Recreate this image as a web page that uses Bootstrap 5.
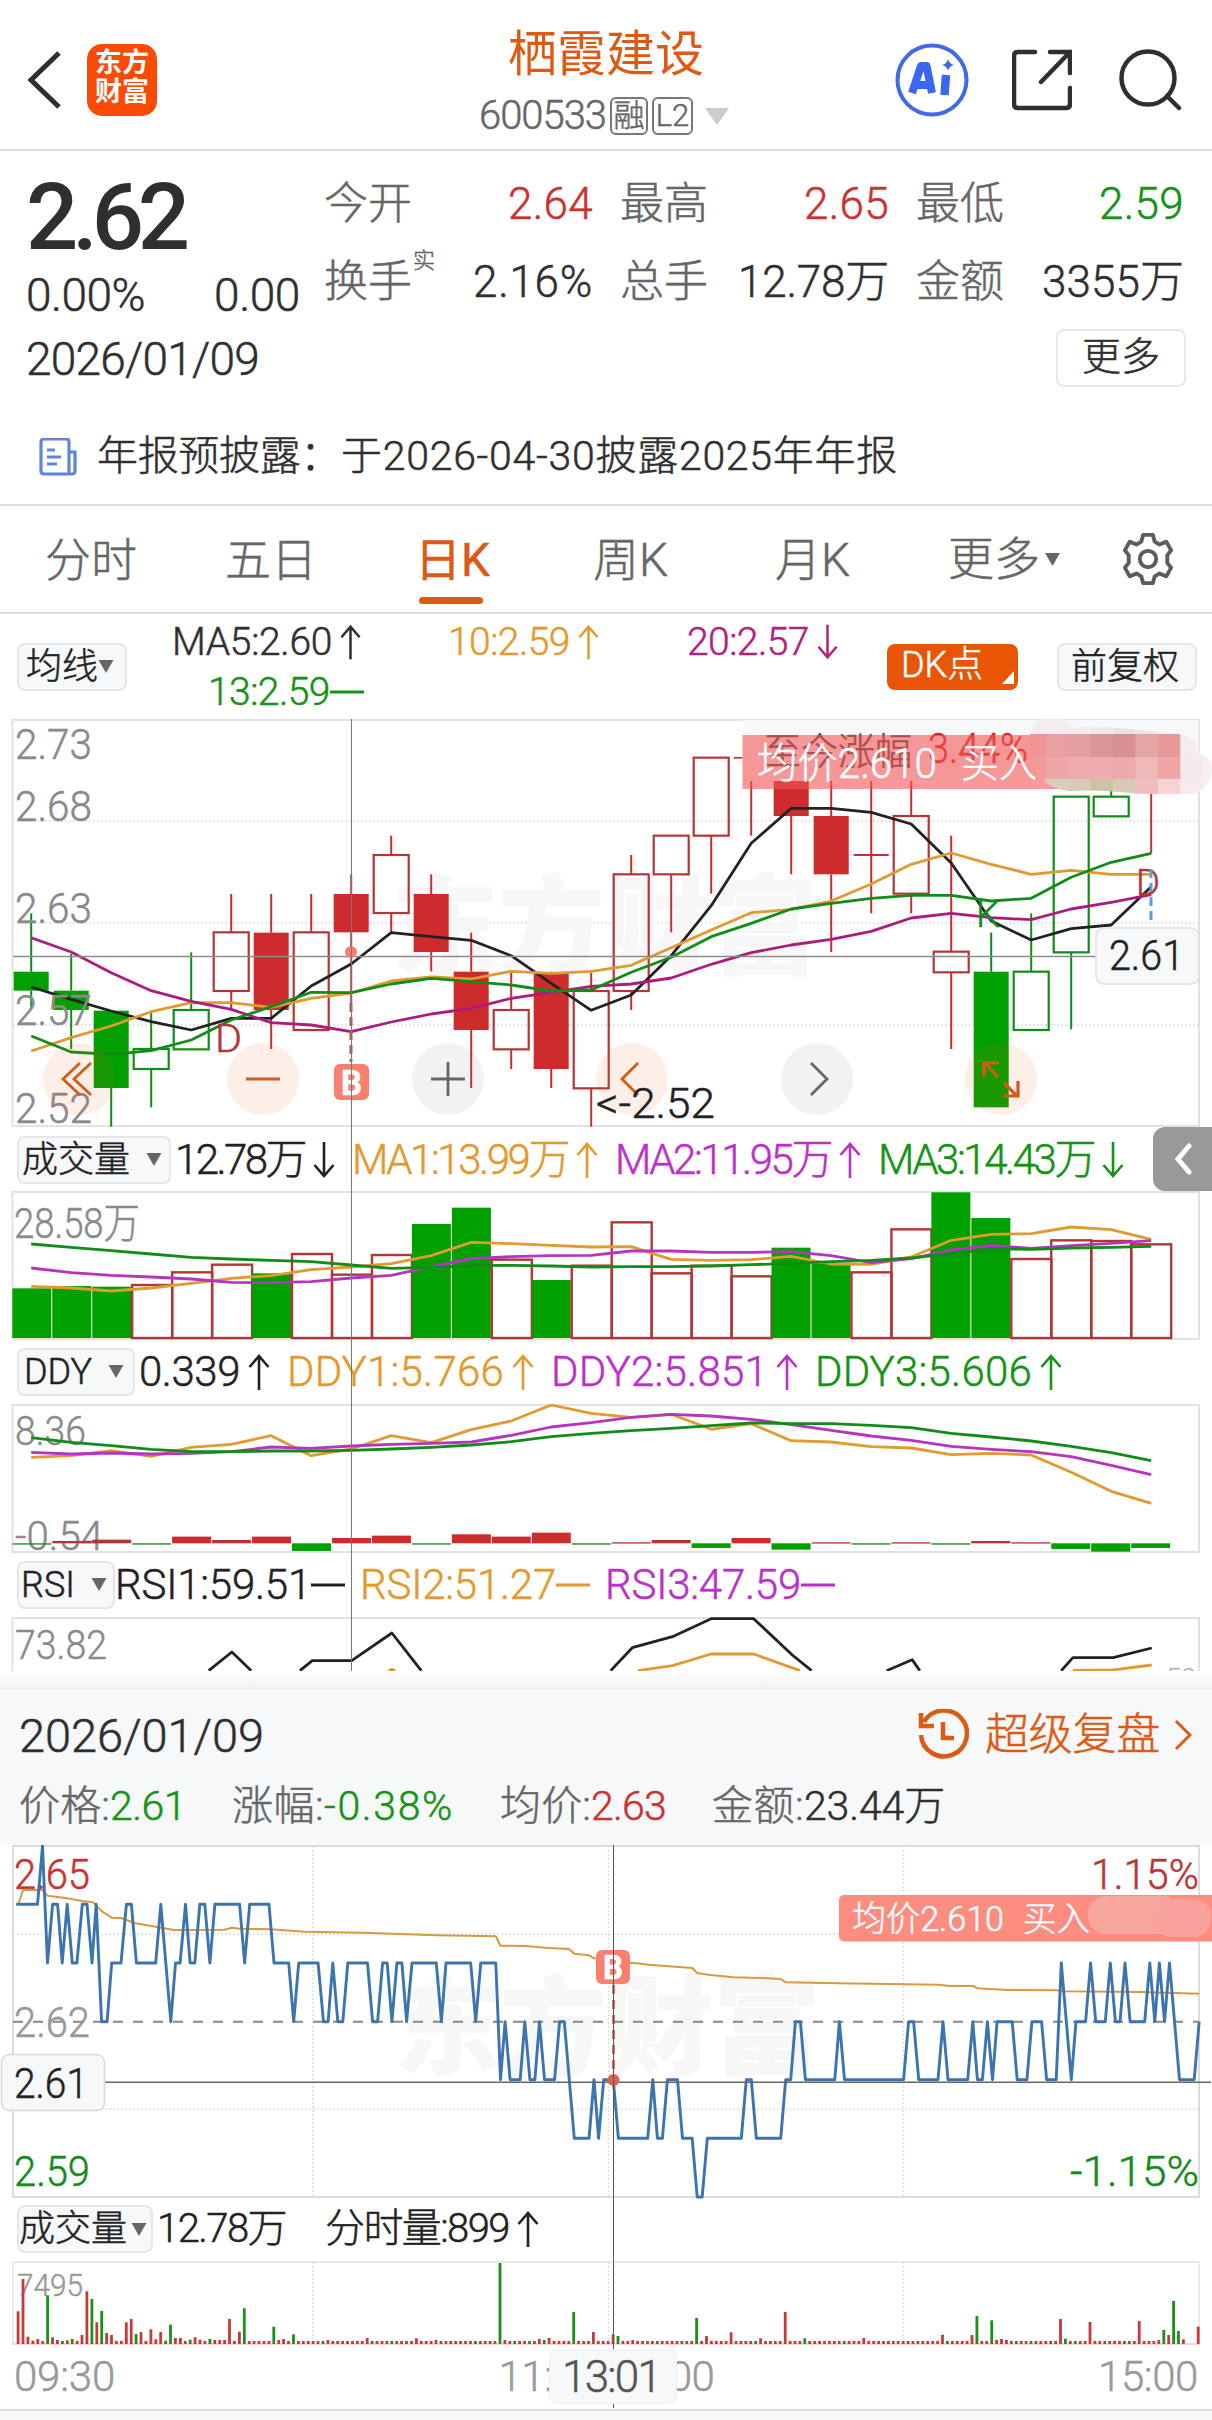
<!DOCTYPE html>
<html lang="zh-CN">
<head>
<meta charset="utf-8">
<meta name="viewport" content="width=device-width, initial-scale=1">
<title>栖霞建设 600533</title>
<link rel="stylesheet" href="https://cdn.jsdelivr.net/npm/bootstrap@5.3.0/dist/css/bootstrap.min.css">
<style>
:root{--ink:#2f2f30;--dim:#666;--red:#cc3030;--grn:#149414;--brand:#dc5a14;--org:#e29a2e;--mag:#b0207f;--pur:#bb30c8}
body{width:1212px;height:2420px;overflow:hidden;background:#fff;color:var(--ink);font-family:Roboto,"Noto Sans CJK SC",sans-serif;font-weight:300;font-size:44px;line-height:1;-webkit-text-stroke:.5px currentColor}
svg{display:block;flex:none}
svg text{font-family:Roboto,"Noto Sans CJK SC",sans-serif;-webkit-text-stroke:0}
[data-w]{display:inline-block;white-space:nowrap;flex:none}
.c-dim{color:var(--dim)}.c-red{color:var(--red)}.c-grn{color:var(--grn)}.c-brand{color:var(--brand)}.c-org{color:var(--org)}.c-mag{color:var(--mag)}.c-pur{color:var(--pur)}
.topbar{height:151px;border-bottom:2px solid #ddd}
.top-left{width:400px;padding:11px 0 0 27px}
.applogo{width:70px;height:72px;border-radius:15px;background:#fb4a05;color:#fff;font-weight:700;font-size:27px;line-height:29px;padding-top:5px;margin-left:26px;-webkit-text-stroke:0}
.top-mid{width:412px;padding-top:28px}
.stock-name{font-size:49px;line-height:54px;font-weight:400;-webkit-text-stroke:0}
.code-row{height:42px;margin-top:13px;font-size:40px;padding-right:4px}
.tagbox{border:2px solid #777;border-radius:6px;height:38px;font-size:31px;line-height:34px}
.tri-gap{margin-left:12px}
.top-right{width:400px;padding:11px 30px 0 0}
.gap-share{margin-left:43px}.gap-search{margin-left:46px}
.quote{height:249px;padding:22px 28px 0 26px}
.q-left{width:298px}
.bigprice{font-size:92px;line-height:90px;font-weight:500;height:89px;-webkit-text-stroke:0}
.q-left .ln{height:64px;line-height:66px;font-size:46px}
.q-right{width:860px;padding-top:9px}
.q-row{height:78px;font-size:44px}
.q-cell{width:269px;height:44px;margin-right:27px}
.q-cell:last-child{margin-right:0;width:268px}
.supmark{font-size:22px;margin:-42px 0 0 1px}
.morebtn{width:130px;height:58px;border:2px solid #e8e8e8;border-radius:8px;font-size:39px;line-height:52px;margin:-9px -2px 0 0}
.notice{height:106px;border-bottom:2px solid #ddd;font-size:41px;padding:9px 0 0 39px}
.tabs-row{height:108px;border-bottom:2px solid #ddd;padding-left:45px;font-size:46px;color:var(--dim)}
.tab-it{width:180px;height:106px;line-height:109px}
.tab-b{width:190px}.tab-c{width:178px}.tab-d{width:182px}.tab-e{width:173px}
.tab-it.on{color:var(--brand);position:relative;font-weight:400}
.tab-it.on::after{content:"";position:absolute;left:4px;bottom:8px;width:64px;height:7px;border-radius:4px;background:var(--brand)}
.chip{background:#f7f8fa;border:2px solid #e4e6ea;border-radius:8px;height:48px;font-size:36px;color:#222;padding-right:4px}
.chip-dk{background:#e85505;border:0;height:46px;padding:3px 0 0 14px;color:#fff}
.chip-adj{margin-left:39px;padding-top:4px}
.malegend{height:105px;padding-left:17px}
.ma-vals{font-size:39px;width:760px;padding-top:3px}
.ma-vals>div{height:50px}
.ma-1{margin-left:45px}.ma-2{margin-left:87px}.ma-3{margin-left:88px}.ma-4{margin-left:81px}
.arr{margin-left:8px}
.leg{font-size:42px;color:#222;padding:0 0 2px 17px}
.leg-vol{height:61px}.leg-sub{height:63px}.leg-min{height:62px;font-size:40px}
.leg-n{margin-left:17px}
.leg-r{margin-left:15px}
.split-l{margin-left:39px}
.charts{position:relative}
.sidehandle{position:absolute;right:0;top:408px;width:59px;height:64px;background:#999;border-radius:12px 0 0 12px}
.vline{position:absolute;top:0;width:1px}
.vline-day{left:351px;height:952px;background:#777}
.vline-min{left:613px;height:563px;background:#555}
.fade-gap{height:18px;background:linear-gradient(#fff,#f2f2f2)}
.sheet{height:156px;background:#f7f8fa;padding:0 20px 0 19px}
.sheet-top{height:92px}
.sheet-date{font-size:47px}
.replay{font-size:44px;margin:0 14px 0 16px}
.sheet-vals{height:50px;font-size:41px}
.sv{margin-left:46px}
.axis{height:64px;color:#999;font-size:42px;padding:0 14px}
.timebox{position:absolute;left:549px;top:504px;width:128px;height:55px;background:#f7f8fa;border-radius:8px;color:#555;border:1px solid #eee;padding-right:4px}
.foot{height:12px;background:#f7f8fa;border-top:2px solid #ddd}
</style>
<script src="https://cdn.jsdelivr.net/npm/bootstrap@5.3.0/dist/js/bootstrap.bundle.min.js"></script>
</head>
<body>
<svg width="0" height="0" class="position-absolute">
  <symbol id="up" viewBox="0 0 22 38"><path d="M11 37V3M1.500 14L11 3l9.500 11" fill="none" stroke="currentColor" stroke-width="2.600"/></symbol>
  <symbol id="dn" viewBox="0 0 22 38"><path d="M11 1v34M1.500 24L11 35l9.500-11" fill="none" stroke="currentColor" stroke-width="2.600"/></symbol>
  <symbol id="ds" viewBox="0 0 34 38"><path d="M0 19h34" stroke="currentColor" stroke-width="3"/></symbol>
  <symbol id="tri" viewBox="0 0 16 14"><path d="M0 0h16L8 14z" fill="#666"/></symbol>
</svg>

<header class="topbar d-flex align-items-center">
  <div class="top-left d-flex align-items-center">
    <svg width="34" height="60" viewBox="0 0 34 60"><path d="M32 3L4 30l28 27" fill="none" stroke="#2f2f30" stroke-width="5"/></svg>
    <div class="applogo text-center">东方<br>财富</div>
  </div>
  <div class="top-mid d-flex flex-column align-items-center align-self-start">
    <div class="stock-name c-brand">栖霞建设</div>
    <div class="code-row d-flex align-items-center c-dim">
      <span data-w="127">600533</span>
      <span class="tagbox ms-1 text-center" data-w="38">融</span>
      <span class="tagbox ms-1 text-center" data-w="41">L2</span>
      <svg class="tri-gap" width="24" height="17" viewBox="0 0 24 17"><path d="M0 0h24L12 17z" fill="#ccc"/></svg>
    </div>
  </div>
  <div class="top-right d-flex align-items-center justify-content-end">
    <svg width="74" height="76" viewBox="0 0 74 76"><circle cx="37" cy="38" r="34.500" fill="none" stroke="#4169ea" stroke-width="4"/><path d="M17 51L26 24h5.500L37 51M21 43h14" fill="none" stroke="#3b66f2" stroke-width="8" stroke-linejoin="round"/><path d="M51 33l-1.500 20" stroke="#3b66f2" stroke-width="8.500"/><path d="M53 17q1.500 5 6 6-5 1-6 6-1-5-6-6 5-1 6-6z" fill="#3b66f2"/></svg>
    <svg class="gap-share" width="60" height="62" viewBox="0 0 60 62"><path d="M23 3H6q-4 0-4 4v48q0 4 4 4h48q4 0 4-4V39M38 3H58V24M58 3L29 33" fill="none" stroke="#2f2f30" stroke-width="4.500" stroke-linecap="round"/></svg>
    <svg class="gap-search" width="64" height="62" viewBox="0 0 64 62"><circle cx="30" cy="29" r="26.500" fill="none" stroke="#2f2f30" stroke-width="4.500"/><path d="M49 47l12 12" stroke="#2f2f30" stroke-width="4.500" stroke-linecap="round"/></svg>
  </div>
</header>

<section class="quote d-flex">
  <div class="q-left">
    <div class="bigprice"><span data-w="158">2.62</span></div>
    <div class="ln d-flex"><span data-w="119">0.00%</span><span class="ms-auto me-4" data-w="86">0.00</span></div>
    <div class="ln"><span data-w="233">2026/01/09</span></div>
  </div>
  <div class="q-right">
    <div class="d-flex q-row"><div class="q-cell d-flex justify-content-between"><span class="c-dim">今开</span><span class="c-red" data-w="85">2.64</span></div><div class="q-cell d-flex justify-content-between"><span class="c-dim">最高</span><span class="c-red" data-w="85">2.65</span></div><div class="q-cell d-flex justify-content-between"><span class="c-dim">最低</span><span class="c-grn" data-w="85">2.59</span></div></div>
    <div class="d-flex q-row"><div class="q-cell d-flex justify-content-between"><span class="c-dim d-flex">换手<span class="supmark align-self-center">实</span></span><span data-w="120">2.16%</span></div><div class="q-cell d-flex justify-content-between"><span class="c-dim">总手</span><span data-w="151">12.78万</span></div><div class="q-cell d-flex justify-content-between"><span class="c-dim">金额</span><span data-w="142">3355万</span></div></div>
    <div class="morebtn text-center ms-auto">更多</div>
  </div>
</section>

<section class="notice d-flex align-items-center">
  <svg width="38" height="38" viewBox="0 0 38 38"><path d="M30 14V4q0-3-3-3H5Q2 1 2 4v29q0 3 3 3h28q3 0 3-3V14h-6v22M8 12h8M8 19h14M8 26h10" fill="none" stroke="#5f84dd" stroke-width="3.200"/></svg>
  <span class="ms-3 ps-1" data-w="244">年报预披露：</span><span data-w="557">于2026-04-30披露2025年年报</span>
</section>

<nav class="tabs-row d-flex align-items-center">
  <div class="tab-it">分时</div><div class="tab-it tab-b">五日</div><div class="tab-it tab-c on">日K</div><div class="tab-it tab-d">周K</div><div class="tab-it tab-e">月K</div>
  <div class="tab-it tab-e d-flex align-items-center">更多<svg class="ms-1" width="17" height="13"><use href="#tri"/></svg></div>
  <svg width="54" height="56" viewBox="-28 -28 56 56"><path d="M-5-25H5L7-18 12-15 19-18 24-9 20-4V4L24 9 19 18 12 15 7 18 5 25H-5L-7 18-12 15-19 18-24 9-20 4V-4L-24-9-19-18-12-15-7-18z" fill="none" stroke="#5c5c5c" stroke-width="4" stroke-linejoin="round"/><circle r="8.500" fill="none" stroke="#5c5c5c" stroke-width="4"/></svg>
</nav>

<section class="malegend d-flex align-items-center">
  <div class="chip d-flex align-items-center justify-content-center" data-w="110">均线<svg width="16" height="13"><use href="#tri"/></svg></div>
  <div class="ma-vals align-self-start">
    <div class="d-flex align-items-center"><span class="ma-1" data-w="160">MA5:2.60</span><svg width="21" height="38" class="arr"><use href="#up"/></svg>
      <span class="ma-2 c-org" data-w="122">10:2.59</span><svg width="21" height="38" class="arr c-org"><use href="#up"/></svg>
      <span class="ma-3 c-mag" data-w="122">20:2.57</span><svg width="21" height="38" class="arr c-mag"><use href="#dn"/></svg></div>
    <div class="d-flex align-items-center c-grn"><span class="ma-4" data-w="122">13:2.59</span><svg width="34" height="38"><use href="#ds"/></svg></div>
  </div>
  <div class="chip chip-dk" data-w="131">DK点<svg class="float-end mt-4 me-1" width="12" height="13"><path d="M12 0v13H0z" fill="#fff"/></svg></div>
  <div class="chip chip-adj text-center" data-w="140">前复权</div>
</section>

<section class="charts">
  <svg id="kline" width="1212" height="411" viewBox="0 719 1212 411"></svg>
  <div class="leg leg-vol d-flex align-items-center">
    <div class="chip d-flex align-items-center justify-content-center" data-w="154">成交量<svg class="ms-3" width="16" height="13"><use href="#tri"/></svg></div>
    <span class="ms-1" data-w="130">12.78万</span><svg class="arr" width="22" height="40"><use href="#dn"/></svg>
    <span class="leg-n c-org" data-w="216">MA1:13.99万</span><svg class="arr c-org" width="22" height="40"><use href="#up"/></svg>
    <span class="leg-n c-pur" data-w="216">MA2:11.95万</span><svg class="arr c-pur" width="22" height="40"><use href="#up"/></svg>
    <span class="leg-n c-grn" data-w="216">MA3:14.43万</span><svg class="arr c-grn" width="22" height="40"><use href="#dn"/></svg>
  </div>
  <svg id="vol" width="1212" height="150" viewBox="0 1191 1212 150"></svg>
  <div class="leg leg-sub d-flex align-items-center">
    <div class="chip d-flex align-items-center justify-content-center" data-w="118">DDY<svg class="ms-3" width="16" height="13"><use href="#tri"/></svg></div>
    <span class="ms-1" data-w="101">0.339</span><svg class="arr" width="22" height="40"><use href="#up"/></svg>
    <span class="leg-n c-org" data-w="217">DDY1:5.766</span><svg class="arr c-org" width="22" height="40"><use href="#up"/></svg>
    <span class="leg-n c-pur" data-w="217">DDY2:5.851</span><svg class="arr c-pur" width="22" height="40"><use href="#up"/></svg>
    <span class="leg-n c-grn" data-w="217">DDY3:5.606</span><svg class="arr c-grn" width="22" height="40"><use href="#up"/></svg>
  </div>
  <svg id="ddy" width="1212" height="150" viewBox="0 1404 1212 150"></svg>
  <div class="leg leg-sub d-flex align-items-center">
    <div class="chip d-flex align-items-center justify-content-center" data-w="98">RSI<svg class="ms-3" width="16" height="13"><use href="#tri"/></svg></div>
    <span data-w="196">RSI1:59.51</span><svg width="34" height="38"><use href="#ds"/></svg>
    <span class="leg-r c-org" data-w="196">RSI2:51.27</span><svg class="c-org" width="34" height="38"><use href="#ds"/></svg>
    <span class="leg-r c-pur" data-w="196">RSI3:47.59</span><svg class="c-pur" width="34" height="38"><use href="#ds"/></svg>
  </div>
  <svg id="rsi" width="1212" height="54" viewBox="0 1617 1212 54"></svg>
  <div class="vline vline-day"></div>
  <div class="sidehandle d-flex align-items-center justify-content-center"><svg width="20" height="32" viewBox="0 0 20 32"><path d="M16 3L5 16l11 13" fill="none" stroke="#fff" stroke-width="5" stroke-linecap="round"/></svg></div>
</section>

<div class="fade-gap"></div>
<section class="sheet">
  <div class="sheet-top d-flex align-items-center">
    <span class="sheet-date" data-w="245">2026/01/09</span>
    <svg class="ms-auto" width="52" height="52" viewBox="0 0 52 52"><path d="M7 13A23 23 0 1 1 4 26M4 4v13h13M26 13v16h11" fill="none" stroke="#dc5a14" stroke-width="4.500"/></svg>
    <span class="c-brand replay" data-w="175">超级复盘</span>
    <svg width="18" height="32" viewBox="0 0 18 32"><path d="M2 2l14 14L2 30" fill="none" stroke="#dc5a14" stroke-width="3"/></svg>
  </div>
  <div class="sheet-vals d-flex align-items-center">
    <span class="c-dim" data-w="91">价格:</span><span class="c-grn" data-w="76">2.61</span>
    <span class="c-dim sv" data-w="92">涨幅:</span><span class="c-grn" data-w="130">-0.38%</span>
    <span class="c-dim sv" data-w="91">均价:</span><span class="c-red" data-w="75">2.63</span>
    <span class="c-dim sv" data-w="92">金额:</span><span data-w="141">23.44万</span>
  </div>
</section>

<section class="position-relative">
  <svg id="intra" width="1212" height="354" viewBox="0 1845 1212 354"></svg>
  <div class="leg leg-min d-flex align-items-center">
    <div class="chip d-flex align-items-center justify-content-center" data-w="136">成交量<svg class="ms-1" width="16" height="13"><use href="#tri"/></svg></div>
    <span class="ms-1" data-w="129">12.78万</span><span class="split-l" data-w="184">分时量:899</span><svg class="arr" width="22" height="38"><use href="#up"/></svg>
  </div>
  <svg id="mvol" width="1212" height="84" viewBox="0 2261 1212 84"></svg>
  <div class="axis d-flex align-items-center justify-content-between"><span data-w="101">09:30</span><span data-w="216">11:30/13:00</span><span data-w="100">15:00</span></div>
  <div class="vline vline-min"></div>
  <div class="timebox d-flex align-items-center justify-content-center"><span data-w="98">13:01</span></div>
</section>
<div class="foot"></div>

<script>
const G='#00a000',GL='#128c18',R='#ce2c2c',RL='#b33636',ORG='#e09a30',MAG='#ad1c7c',PUR='#b733c0',BLK='#222';
const $=id=>document.getElementById(id);
const text=(x,y,w,s,c,t,extra='')=>`<text x="${x}" y="${y}" font-size="${s}" fill="${c}" stroke="${c}" stroke-width=".5" textLength="${w}" lengthAdjust="spacingAndGlyphs" ${extra}>${t}</text>`;
const rect=(x,y,w,h,f,extra='')=>`<rect x="${x}" y="${y}" width="${w}" height="${h}" fill="${f}" ${extra}/>`;
const seg=(x1,y1,x2,y2,c,w=2,extra='')=>`<path d="M${x1} ${y1}L${x2} ${y2}" stroke="${c}" stroke-width="${w}" ${extra}/>`;
const poly=(pts,c,w=2.8)=>`<polyline points="${pts.map(p=>p.join()).join(' ')}" fill="none" stroke="${c}" stroke-width="${w}" stroke-linejoin="round"/>`;
const cx=i=>31.2+40*i;
const series=(a,base,c,w)=>poly(a.map((v,i)=>[cx(i).toFixed(1),(base+v/3).toFixed(1)]),c,w);
const frame=(y,h)=>rect(12.5,y,1186.5,h,'none','stroke="#e2e2e2" stroke-width="2"');

/* daily candles: high, top, bottom, low, colour, filled */
const K=[[610,785,842,898,'g',1],[732,842,900,1017,'g',1],[902,902,1134,1250,'g',1],[902,1017,1077,1192,'g',0],[727,900,1018,1018,'g',0],[552,667,843,898,'r',0],[552,668,900,1017,'r',1],[552,667,960,960,'r',0],[493,552,667,880,'r',1],[377,435,609,667,'r',0],[493,552,726,784,'r',1],[668,785,960,1134,'r',1],[785,900,1018,1077,'r',0],[785,788,1077,1134,'r',1],[788,843,1135,1250,'r',0],[435,493,843,900,'r',0],[377,377,493,667,'r',0],[143,143,377,551,'r',0],[143,141,146,377,'r',1],[100,200,318,493,'r',1],[100,318,493,726,'r',1],[100,432,438,610,'r',1],[200,318,551,610,'r',0],[377,725,787,1017,'r',0],[668,785,1192,1192,'g',1],[610,785,960,960,'g',0],[260,260,727,958,'g',0],[200,260,319,319,'g',0],[200,430,430,430,'r',0]];
let s=frame(720,406);
[821,923,1025].forEach(y=>s+=seg(13,y,1199,y,'#ddd',1.5,'stroke-dasharray="2 2"'));
s+=text(392,966,426,108,'#f7f7f7','东方财富','font-weight="900"');
K.forEach(([h,t,b,l,c,f],i)=>{const x=cx(i),Y=v=>710+v/3,col=c=='g'?(f?G:GL):(f?R:RL);
 if(h<t)s+=seg(x,Y(h),x,Y(t),c=='g'?GL:R,2);if(l>b)s+=seg(x,Y(b),x,Y(l),c=='g'?GL:R,2);
 if(b-t>0)s+=f?rect(x-17.5,Y(t),35,(b-t)/3,col):rect(x-17.5,Y(t),35,(b-t)/3,'none',`stroke="${col}" stroke-width="2.2"`)});
s+=series([831,868,903,935,960,925,925,828,762,668,680,691,737,820,901,855,737,587,400,295,295,307,342,459,633,690,656,645,530],710,BLK);
s+=series([1023,983,948,905,878,878,892,865,849,813,801,807,784,790,784,766,713,660,608,598,573,522,463,429,463,493,481,493,493],710,ORG);
s+=series([683,726,788,842,874,898,938,945,965,936,912,895,865,847,829,822,804,763,728,705,688,664,624,610,623,629,597,577,554],710,MAG);
s+=series([978,1026,1033,1022,990,930,890,847,848,822,805,815,825,843,840,787,742,680,640,597,580,565,556,556,573,565,502,457,430],710,GL);
[['2.73',759],['2.68',821],['2.63',923],['2.57',1025],['2.52',1123]].forEach(([t,y])=>s+=text(15,y,77,42,'#8a8a8a',t));
s+=seg(13,956.5,1199,956.5,'#8c8c8c',1.4);
s+=text(215,1052,27,38,RL,'D')+text(1136,895,24,36,RL,'D');
s+=text(976,927,24,36,GL,'K');
s+=seg(1151,869,1151,925,'#5b9be6',3,'stroke-dasharray="9 5"');
s+=seg(351,1003,351,1062,'#c0504d',3,'stroke-dasharray="9 5"')+`<circle cx="351" cy="952" r="6" fill="#f08070"/>`;
s+=rect(334,1064,35,36,'#f9806e','rx="6"')+text(341,1095,21,35,'#fff','B','font-weight="700"');
[[79,1],[263,1],[448,0],[632,1],[817,0],[1001,1]].forEach(([x,o])=>s+=`<circle cx="${x}" cy="1079" r="36" fill="${o?'rgba(235,100,25,.1)':'rgba(90,90,90,.08)'}"/>`);
const ic=(d,c,w=2.8)=>`<path d="${d}" fill="none" stroke="${c}" stroke-width="${w}"/>`;
s+=ic('M80 1063L63 1079L80 1095M91 1063L74 1079L91 1095M246 1079H280','#d55a18')+ic('M431 1079H465M448 1062V1096','#666');
s+=ic('M638 1063L622 1079L638 1095','#d55a18')+ic('M811 1063L827 1079L811 1095','#666');
s+=ic('M998 1077L985 1063M984 1077V1063H999M1004 1083L1017 1096M1018 1081V1096H1003','#d55a18',3.2);
s+=text(596,1118,119,42,'#222','&lt;-2.52');
/* gain banner and the covered account name */
s+=rect(742.5,720,456,61,'#f7f8fa')+text(764,765,148,37,'#444','至今涨幅')+text(928,763,100,42,'#dd2222','3.44%');
s+=rect(742.5,735,438,54,'rgba(243,85,85,.6)')+text(757,778,180,42,'#fff','均价2.610')+text(961,777,76,40,'#fff','买入');
s+='<clipPath id="blob"><path d="M1030 734Q1036 715 1052 716Q1064 717 1073 728Q1100 726 1130 729L1178 734Q1196 736 1199 753Q1212 758 1212 770Q1210 792 1190 794H1140Q1100 789 1070 791Q1046 789 1038 772Q1028 752 1030 734Z"/></clipPath><g clip-path="url(#blob)">';
const M=[['#f4ecee','#f4ecee','#f2eaec','#eee9ea','#e6e2e4','#eae5e7','#f3edef','#f4eef0','#f6eff1'],['#f29497','#e8a0a3','#e69fa1','#dc9698','#d89092','#e2a6a7','#e89899','#f5ecee','#f7eff1'],['#f29a9c','#efa6a8','#f1abad','#eeaaac','#eea9ab','#efb9ba','#f0a5a7','#f6eaec','#f7eff1'],['#ecb4b4','#d9cdbc','#d6cbb8','#cbc4a2','#d8c8b4','#f0bec1','#f7d3d5','#f9eaec','#f9f0f2']];
M.forEach((r,j)=>r.forEach((c,i)=>s+=rect(1023.5+i*22.4,[710,734,757,779][j],23,24,c)));
s+='</g>';
s+=rect(1096,928,103,56,'#f7f8fa','rx="8" stroke="#dcdfe4" stroke-width="1.500"')+text(1109,970,75,42,'#222','2.61');
$('kline').innerHTML=s;

/* daily volume */
const V=[475,468,470,462,424,401,430,369,431,372,282,233,386,450,404,274,427,404,436,353,400,424,295,187,264,384,328,330,340],VG=[0,1,2,6,10,11,13,19,20,23,24];
s=frame(1192,147);
V.forEach((v,i)=>{const x=12.3+39.96*i,y=1130+v/3,h=(624-v)/3;s+=VG.includes(i)?rect(x,y,39,h,G):rect(x,y+1,40,h-1,'none','stroke="#b33636" stroke-width="2.400"')});
s+=text(14,1238,126,42,'#8a8a8a','28.58万');
s+=series([469,474,483,474,460,445,437,419,411,401,377,337,341,346,351,350,388,391,389,379,402,403,381,331,313,311,291,299,328],1130,ORG);
s+=series([414,428,436,441,447,457,458,455,444,436,410,386,380,377,376,363,363,367,367,365,377,398,386,360,346,355,347,340,332],1130,PUR);
s+=series([342,352,362,372,382,387,391,395,405,415,412,407,406,408,411,410,410,408,404,400,395,391,384,371,357,358,354,352,349],1130,GL);
$('vol').innerHTML=s;

/* DDY */
s=frame(1405,147)+text(15,1445,71,41,'#8a8a8a','8.36')+text(15,1550,88,41,'#8a8a8a','-0.54');
[2,-7,-11,3,-20,-10,-20,23,-16,-23,3,-27,-20,-32,4,-3,-10,14,-16,19,-3,2,-3,4,-7,-3,17,25,14].forEach((v,i)=>{s+=rect(12.3+39.96*i,1543.3+Math.min(v,0)/3,39,Math.max(Math.abs(v)/3,1.3),v>0?(v>9?G:GL):(v<-15?R:RL))});
s+=series([982,977,962,979,952,943,917,977,957,917,938,899,873,825,850,862,853,898,881,932,936,950,954,974,970,975,1027,1084,1120],1130,ORG);
s+=series([967,972,969,972,970,965,951,955,948,943,940,936,916,891,878,862,853,858,868,884,901,918,931,949,958,965,980,1006,1034],1130,PUR);
s+=series([923,937,947,958,965,965,963,963,961,957,952,945,935,920,910,902,895,887,879,881,881,886,893,910,921,933,949,968,992],1130,GL);
$('ddy').innerHTML=s;

/* RSI, cut off by the sheet */
s=frame(1618,147)+text(15,1659,92,41,'#8a8a8a','73.82');
const q=a=>a.map(([x,y])=>[x/1.2937,1550+y/3]);
[[[270,362],[300,306],[325,362]],[[388,362],[404,332],[455,332],[507,249],[545,362]],[[790,362],[818,293],[870,260],[920,206],[975,206],[1025,315],[1050,362]],[[1147,362],[1180,329],[1190,362]],[[1373,362],[1388,323],[1440,323],[1490,294]]].forEach(a=>s+=poly(q(a),BLK));
[[[825,362],[870,347],[920,312],[975,312],[1035,362]],[[1388,361],[1440,360],[1490,345]],[[503,363],[507,358],[511,363]]].forEach(a=>s+=poly(q(a),ORG));
s+=text(1166,1688,30,28,'#bbb','50');
$('rsi').innerHTML=s;

/* intraday price */
const A=[42,193,97,193,110,18,123,369,136,193,149,193,161,369,174,193,187,369,199,369,213,193,225,193,238,369,249,193,263,545,277,545,289,369,313,369,327,193,340,193,353,369,403,369,416,193,442,545,454,369,466,369,480,193,492,369,504,369,517,193,530,193,543,369,556,193,620,193,633,369,646,193,696,193,709,369,747,369,760,545,773,369,823,369,837,545,849,545,861,369,874,545,887,545,900,369,951,369,964,545,977,545,990,369,1002,369,1014,545,1027,369,1040,369,1052,545,1066,369,1129,369,1142,545,1154,369,1218,369,1231,545,1244,369,1283,369,1295,719,1307,545,1320,719,1346,719,1358,545,1371,719,1384,719,1396,545,1409,719,1435,719,1448,545,1460,545,1486,895,1524,895,1537,719,1549,895,1562,719];
const B=[0,719,19,719,32,895,108,895,121,719,133,895,146,895,159,719,185,719,198,895,223,895,236,1071,249,1071,262,895,350,895,363,719,376,719,389,895,452,895,465,719,478,719,490,545,503,545,516,719,592,719,604,545,617,719,770,719,783,545,796,545,809,719,859,719,872,545,885,719,936,719,949,545,961,719,974,719,987,545,1000,719,1012,545,1051,545,1064,719,1089,719,1102,545,1127,545,1140,719,1165,719,1178,369,1204,719,1216,545,1241,545,1254,369,1267,545,1292,545,1305,369,1318,545,1330,545,1343,369,1356,545,1394,545,1407,369,1420,545,1432,369,1445,545,1458,369,1484,719,1522,719,1535,545];
const C=[48,190,60,149,110,150,123,167,170,174,213,183,240,187,265,215,289,233,313,234,350,250,403,260,450,270,580,269,600,263,620,266,700,268,790,275,940,278,1130,286,1283,289,1295,317,1360,318,1420,324,1473,327,1486,341,1524,346,1537,355,1560,356];
const D=[0,357,19,366,80,370,110,374,223,384,236,399,270,405,330,412,400,414,452,417,465,427,600,430,860,434,890,438,950,438,961,445,1040,450,1165,451,1190,454,1380,456,1470,459,1535,461];
const pr=(a,x0)=>{const o=[];for(let i=0;i<a.length;i+=2)o.push([+(x0+a[i]/2.5875).toFixed(1),+(1840+a[i+1]/3).toFixed(1)]);return o};
s=rect(13,1846,1186,351,'none','stroke="#dcdcdc" stroke-width="2"');
s+=text(394,2066,426,108,'#f7f7f7','东方财富','font-weight="900"');
[1934,2109].forEach(y=>s+=seg(13,y,1199,y,'#ddd',1.5,'stroke-dasharray="2 2"'));
[313,608.5,903.5].forEach(x=>s+=seg(x,1846,x,2197,'#ddd',1.5,'stroke-dasharray="2 2"'));
s+=seg(13,2021.7,1199,2021.7,'#888',2,'stroke-dasharray="10 10"');
s+=text(14,1889,76,42,'#cc3030','2.65')+text(14,2037,76,42,'#999','2.62')+text(14,2186,76,42,GL,'2.59')+text(1091,1889,108,42,'#b93434','1.15%')+text(1070,2186,129,42,GL,'-1.15%');
s+=poly([...pr(C,0),...pr(D,606)],'#d89a40',2);
s+=poly([...pr(A,0),...pr(B,606)],'#3c74ae',2.9);
s+=seg(105,2082.3,1211,2082.3,'#666',1.4);
s+=seg(613.5,1985,613.5,2080,'#cf4a42',2.5,'stroke-dasharray="9 6"')+'<circle cx="613.500" cy="2080" r="6" fill="#e2604f"/>';
s+=rect(596,1950,34,34,'#f9806e','rx="6"')+text(603,1979,20,33,'#fff','B','font-weight="700"');
s+=rect(1.5,2054.5,103,56,'#f7f8fa','rx="8" stroke="#d6d9de" stroke-width="1.500"')+text(14,2098,74,42,'#222','2.61');
s+=rect(839,1895,385,46.500,'#fe8c81','rx="5"')+text(852,1931,152,35,'#fff','均价2.610')+text(1023,1931,67,34,'#fff','买入')+rect(1088,1896,92,38,'#f7a69c','rx="18"')+rect(1155,1899,56,38,'#f8a29b','rx="17"');
$('intra').innerHTML=s;

/* minute volume: index -> height (negative = down tick) */
const MV={0:98,1:195,2:22,3:10,4:15,5:9,6:-146,7:20,8:12,10:11,11:-15,13:27,14:158,15:-135,16:65,17:-99,18:33,19:27,22:65,23:75,24:-30,25:36,27:44,28:14,29:36,30:-10,31:-58,32:18,33:18,35:-13,36:20,37:13,39:-15,40:12,41:12,42:12,43:75,45:37,46:-107,52:-52,53:12,54:15,56:-29,63:12,71:18,81:17,85:12,98:-243,99:12,106:15,107:-12,108:18,113:-96,117:36,121:29,122:-24,125:12,138:-78,140:24,145:35,151:17,156:96,160:-17,172:18,188:28,194:27,195:-84,198:-71,199:12,200:15,201:12,212:75,213:-16,218:66,228:69,232:12,233:-42,234:27,235:-129,236:-39,237:14,238:0,239:0,240:52};
[9,62,72,76,79,86,93,101,104,130,135,150,168,183,189,203,206,210,215,221,226].forEach(i=>MV[i]??=-9);
s=rect(13,2262,1186,82,'none','stroke="#e4e4e4" stroke-width="1.500"')+seg(13,2344,1199,2344,'#f8d5d5',2);
[313,608.5,903.5].forEach(x=>s+=seg(x,2262,x,2344,'#ddd',1.5,'stroke-dasharray="2 2"'));
s+=text(17,2296,66,32,'#999','7495');
for(let i=0;i<241;i++){const v=MV[i]??9,h=Math.abs(v)/3;s+=rect((16.7+i*4.917).toFixed(1),(2344-h).toFixed(1),2.8,h.toFixed(1),v<0?'#1a921a':'#c63a3a')}
$('mvol').innerHTML=s;

/* tracking: spread each label over its column width */
document.querySelectorAll('span[data-w]:not(.tagbox)').forEach(e=>{const w=+e.dataset.w,n=e.textContent.length,p=parseFloat(getComputedStyle(e).paddingLeft);e.style.letterSpacing=((w-e.getBoundingClientRect().width+p)/n).toFixed(2)+'px';e.style.width=w+p+'px'});
document.querySelectorAll('div[data-w],.tagbox').forEach(e=>e.style.width=e.dataset.w+'px');
</script>
</body>
</html>
